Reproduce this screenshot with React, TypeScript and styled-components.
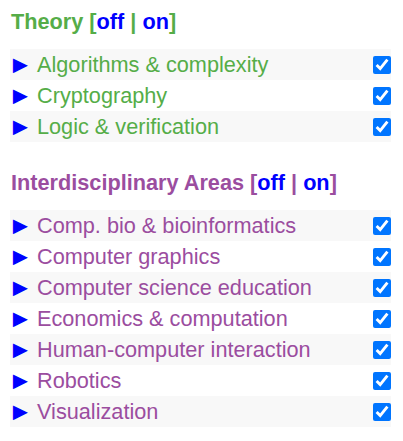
import React, { useState } from 'react';
import styled, { createGlobalStyle } from 'styled-components';

const GlobalStyle = createGlobalStyle`
  body {
    margin: 0;
    background: #ffffff;
    font-family: "Liberation Sans", Arial, sans-serif;
  }
`;

const Page = styled.div`
  padding: 9px 12px 0 10px;
  display: flex;
  flex-direction: column;
  gap: 28px;
`;

const Section = styled.div`
  display: flex;
  flex-direction: column;
`;

const Heading = styled.div<{ color: string }>`
  color: ${({ color }) => color};
  font-size: 21.7px;
  line-height: 26px;
  font-weight: bold;
  padding-left: 1px;
  margin-bottom: 14px;
`;

const Toggle = styled.a`
  color: #0000ff;
  text-decoration: none;
  cursor: pointer;
`;

const List = styled.div`
  display: flex;
  flex-direction: column;
`;

const Row = styled.div<{ striped: boolean }>`
  height: 31px;
  display: flex;
  align-items: center;
  background-color: ${({ striped }) => (striped ? '#f8f8f8' : 'transparent')};
`;

const Label = styled.span<{ color: string }>`
  color: ${({ color }) => color};
  font-size: 21.7px;
  white-space: nowrap;
  display: flex;
  align-items: center;
`;

const Arrow = styled.span`
  color: #0000ff;
  display: inline-block;
  font-size: 25px;
  line-height: 1;
  width: 29px;
  margin-left: -2px;
`;

const Check = styled.input`
  margin: 0 0 0 auto;
  width: 18px;
  height: 18px;
  accent-color: #0075ff;
`;

type Area = { title: string; color: string; items: string[] };

const areas: Area[] = [
  {
    title: 'Theory',
    color: '#55ad48',
    items: ['Algorithms & complexity', 'Cryptography', 'Logic & verification'],
  },
  {
    title: 'Interdisciplinary Areas',
    color: '#9b4d9f',
    items: [
      'Comp. bio & bioinformatics',
      'Computer graphics',
      'Computer science education',
      'Economics & computation',
      'Human-computer interaction',
      'Robotics',
      'Visualization',
    ],
  },
];

const AreaSection: React.FC<{ area: Area }> = ({ area }) => {
  const [checked, setChecked] = useState(area.items.map(() => true));

  const setAll = (v: boolean) => setChecked(area.items.map(() => v));

  return (
    <Section>
      <Heading color={area.color}>
        {area.title} [<Toggle onClick={() => setAll(false)}>off</Toggle> |{' '}
        <Toggle onClick={() => setAll(true)}>on</Toggle>]
      </Heading>
      <List>
        {area.items.map((item, i) => (
          <Row key={item} striped={i % 2 === 0}>
            <Label color={area.color}>
              <Arrow>►</Arrow>
              {item}
            </Label>
            <Check
              type="checkbox"
              checked={checked[i]}
              onChange={() => setChecked(checked.map((c, j) => (j === i ? !c : c)))}
            />
          </Row>
        ))}
      </List>
    </Section>
  );
};

const App: React.FC = () => (
  <>
    <GlobalStyle />
    <Page>
      {areas.map((a) => (
        <AreaSection key={a.title} area={a} />
      ))}
    </Page>
  </>
);

export default App;
